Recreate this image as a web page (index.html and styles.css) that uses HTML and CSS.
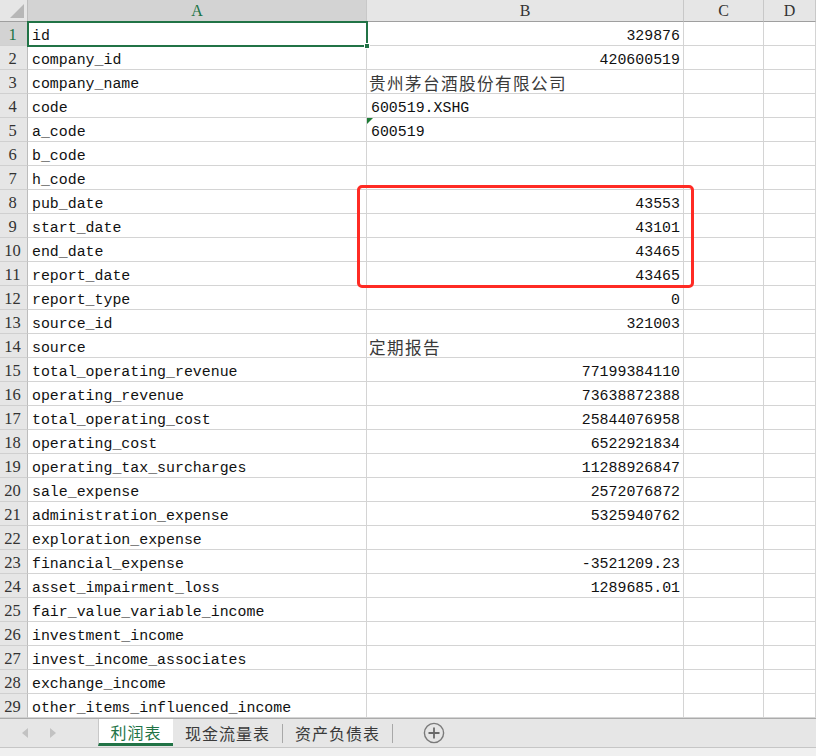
FILE: index.html
```html
<!DOCTYPE html>
<html lang="zh">
<head>
<meta charset="utf-8">
<title>Sheet</title>
<link rel="stylesheet" href="styles.css">
</head>
<body>
<div class="app">
  <div class="sheet">
    <div class="corner"><span class="tri"></span></div>
    <div class="ch sel">A</div>
    <div class="ch">B</div>
    <div class="ch">C</div>
    <div class="ch">D</div>

    <div class="rh sel">1</div><div class="c">id</div><div class="c num">329876</div><div class="c"></div><div class="c"></div>
    <div class="rh">2</div><div class="c">company_id</div><div class="c num">420600519</div><div class="c"></div><div class="c"></div>
    <div class="rh">3</div><div class="c">company_name</div><div class="c cjk">贵州茅台酒股份有限公司</div><div class="c"></div><div class="c"></div>
    <div class="rh">4</div><div class="c">code</div><div class="c">600519.XSHG</div><div class="c"></div><div class="c"></div>
    <div class="rh">5</div><div class="c">a_code</div><div class="c flag">600519</div><div class="c"></div><div class="c"></div>
    <div class="rh">6</div><div class="c">b_code</div><div class="c"></div><div class="c"></div><div class="c"></div>
    <div class="rh">7</div><div class="c">h_code</div><div class="c"></div><div class="c"></div><div class="c"></div>
    <div class="rh">8</div><div class="c">pub_date</div><div class="c num">43553</div><div class="c"></div><div class="c"></div>
    <div class="rh">9</div><div class="c">start_date</div><div class="c num">43101</div><div class="c"></div><div class="c"></div>
    <div class="rh">10</div><div class="c">end_date</div><div class="c num">43465</div><div class="c"></div><div class="c"></div>
    <div class="rh">11</div><div class="c">report_date</div><div class="c num">43465</div><div class="c"></div><div class="c"></div>
    <div class="rh">12</div><div class="c">report_type</div><div class="c num">0</div><div class="c"></div><div class="c"></div>
    <div class="rh">13</div><div class="c">source_id</div><div class="c num">321003</div><div class="c"></div><div class="c"></div>
    <div class="rh">14</div><div class="c">source</div><div class="c cjk">定期报告</div><div class="c"></div><div class="c"></div>
    <div class="rh">15</div><div class="c">total_operating_revenue</div><div class="c num">77199384110</div><div class="c"></div><div class="c"></div>
    <div class="rh">16</div><div class="c">operating_revenue</div><div class="c num">73638872388</div><div class="c"></div><div class="c"></div>
    <div class="rh">17</div><div class="c">total_operating_cost</div><div class="c num">25844076958</div><div class="c"></div><div class="c"></div>
    <div class="rh">18</div><div class="c">operating_cost</div><div class="c num">6522921834</div><div class="c"></div><div class="c"></div>
    <div class="rh">19</div><div class="c">operating_tax_surcharges</div><div class="c num">11288926847</div><div class="c"></div><div class="c"></div>
    <div class="rh">20</div><div class="c">sale_expense</div><div class="c num">2572076872</div><div class="c"></div><div class="c"></div>
    <div class="rh">21</div><div class="c">administration_expense</div><div class="c num">5325940762</div><div class="c"></div><div class="c"></div>
    <div class="rh">22</div><div class="c">exploration_expense</div><div class="c"></div><div class="c"></div><div class="c"></div>
    <div class="rh">23</div><div class="c">financial_expense</div><div class="c num">-3521209.23</div><div class="c"></div><div class="c"></div>
    <div class="rh">24</div><div class="c">asset_impairment_loss</div><div class="c num">1289685.01</div><div class="c"></div><div class="c"></div>
    <div class="rh">25</div><div class="c">fair_value_variable_income</div><div class="c"></div><div class="c"></div><div class="c"></div>
    <div class="rh">26</div><div class="c">investment_income</div><div class="c"></div><div class="c"></div><div class="c"></div>
    <div class="rh">27</div><div class="c">invest_income_associates</div><div class="c"></div><div class="c"></div><div class="c"></div>
    <div class="rh">28</div><div class="c">exchange_income</div><div class="c"></div><div class="c"></div><div class="c"></div>
    <div class="rh">29</div><div class="c">other_items_influenced_income</div><div class="c"></div><div class="c"></div><div class="c"></div>

    <div class="selection"><span class="handle"></span></div>
    <div class="highlight"></div>
  </div>

  <div class="tabbar">
    <div class="nav">
      <span class="arrow left"></span>
      <span class="arrow right"></span>
    </div>
    <div class="tab active">利润表</div>
    <div class="tab">现金流量表</div>
    <span class="sep"></span>
    <div class="tab">资产负债表</div>
    <span class="sep"></span>
    <div class="add">
      <svg width="22" height="22" viewBox="0 0 22 22"><circle cx="11" cy="11" r="9.6" fill="none" stroke="#7a7a7a" stroke-width="1.4"/><path d="M11 5.5v11M5.5 11h11" stroke="#6a6a6a" stroke-width="1.8"/></svg>
    </div>
  </div>
  <div class="status"></div>
</div>
</body>
</html>
```

FILE: styles.css
```css
* { box-sizing: border-box; }
html, body { margin: 0; padding: 0; background: #ffffff; }
body {
  font-family: "Liberation Mono", "Noto Sans CJK SC", monospace;
  font-size: 14.9px;
  color: #111;
  width: 816px;
  height: 756px;
  overflow: hidden;
}
.app { width: 816px; height: 756px; display: flex; flex-direction: column; }

.sheet {
  position: relative;
  display: grid;
  grid-template-columns: 28px 339px 317px 80px 52px;
  grid-template-rows: 22px repeat(29, 24px);
  flex: none;
}
.corner {
  position: relative;
  background: #e6e6e6;
  border-right: 1px solid #bdbdbd;
  border-bottom: 1px solid #9f9f9f;
}
.tri {
  position: absolute;
  right: 3px;
  bottom: 3px;
  width: 0; height: 0;
  border-left: 14px solid transparent;
  border-bottom: 14px solid #b7b7b7;
}
.ch {
  background: #e6e6e6;
  border-right: 1px solid #c8c8c8;
  border-bottom: 1px solid #9f9f9f;
  text-align: center;
  line-height: 22px;
  color: #333;
  font-family: "Liberation Serif", serif;
  font-size: 16px;
}
.ch.sel { background: #d3d3d3; color: #217346; }
.rh {
  background: #e6e6e6;
  border-right: 1px solid #bdbdbd;
  border-bottom: 1px solid #d0d0d0;
  text-align: center;
  padding-top: 2px;
  line-height: 22px;
  color: #333;
  padding-right: 2px;
  font-family: "Liberation Serif", serif;
  font-size: 16.5px;
}
.rh.sel { background: #d3d3d3; color: #217346; }
.c {
  position: relative;
  border-right: 1px solid #d4d4d4;
  border-bottom: 1px solid #d4d4d4;
  padding: 3px 2px 0 4px;
  line-height: 22px;
  white-space: nowrap;
  overflow: hidden;
}
.num { text-align: right; padding-right: 3px; }
.cjk {
  font-family: "Noto Sans CJK SC", sans-serif;
  font-size: 16.6px;
  letter-spacing: 1.4px;
  color: #3a3a3a;
  padding-top: 2px;
  line-height: 23px;
  padding-left: 2px;
}
.flag::before {
  content: "";
  position: absolute;
  left: 0; top: 0;
  width: 0; height: 0;
  border-top: 6px solid #1e7b36;
  border-right: 6px solid transparent;
}

.selection {
  position: absolute;
  left: 27px; top: 21px;
  width: 341px; height: 26px;
  border: 2px solid #217346;
  pointer-events: none;
}
.handle {
  position: absolute;
  right: -4px; bottom: -4px;
  width: 6px; height: 6px;
  background: #217346;
  border: 1px solid #fff;
}
.highlight {
  position: absolute;
  left: 357px; top: 185px;
  width: 337px; height: 103px;
  border: 3px solid #ff2b24;
  border-radius: 5px;
  pointer-events: none;
}

.tabbar {
  flex: none;
  height: 29px;
  background: #e6e6e6;
  border-top: 1px solid #ababab;
  display: flex;
  align-items: stretch;
  font-family: "Noto Sans CJK SC", sans-serif;
  font-size: 16px;
  color: #3a3a3a;
}
.nav { width: 98px; display: flex; align-items: center; padding-left: 22px; gap: 22px; }
.arrow { width: 0; height: 0; border-top: 5px solid transparent; border-bottom: 5px solid transparent; }
.arrow.left { border-right: 6px solid #c2c2c2; }
.arrow.right { border-left: 6px solid #c2c2c2; }
.tab {
  display: flex;
  align-items: center;
  justify-content: center;
  padding: 0 12px;
  letter-spacing: 1px;
}
.tab.active {
  width: 75px;
  padding: 0;
  background: #fff;
  color: #217346;
  border-left: 1px solid #c8c8c8;
  border-bottom: 3px solid #217346;
  height: 27px;
  padding-top: 2px;
}
.sep { width: 1px; background: #a8a8a8; margin: 5px 0 4px; }
.add { display: flex; align-items: center; margin-left: 30px; }
.status { flex: 1; background: #f0f0f0; border-top: 1px solid #c6c6c6; }
```
